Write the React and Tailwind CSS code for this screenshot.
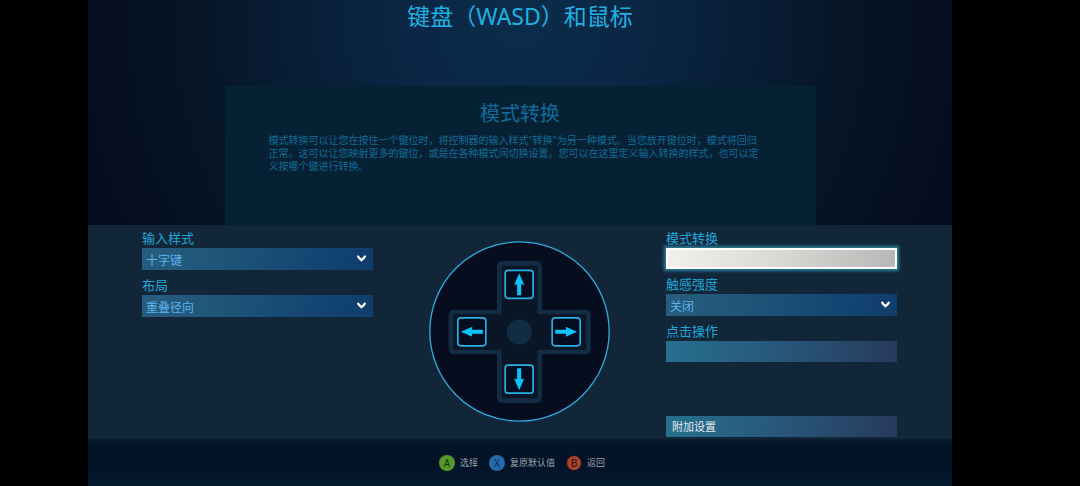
import React from "react";

const SELECT_FILL =
  "bg-[linear-gradient(100deg,#275d7c_0%,#1f5579_35%,#144572_75%,#0f3d6c_100%)]";
const BUTTON_FILL =
  "bg-[linear-gradient(100deg,#277090_0%,#28597b_45%,#273a5c_100%)]";

function SelectField({ id, label, value }) {
  return (
    <div className="flex flex-col">
      <label htmlFor={id} className="text-[13px] leading-5 text-[#20a6d8]">
        {label}
      </label>
      <div className="relative">
        <select
          id={id}
          defaultValue={value}
          className={`block h-[22px] w-full appearance-none pt-1 pr-8 pl-1 text-xs leading-[18px] text-[#5cb2ee] outline-none ${SELECT_FILL}`}
        >
          <option>{value}</option>
        </select>
        <svg
          viewBox="0 0 27 21"
          className="pointer-events-none absolute top-[7px] right-[7px] h-[7px] w-[9px]"
          fill="none"
          stroke="#ffffff"
          strokeWidth="7"
        >
          <path d="M2.5 2 C4 8 9 12 13.5 15.5 C18 12 23 8 24.5 2" />
        </svg>
      </div>
    </div>
  );
}

function ButtonField({ id, label, focused }) {
  return (
    <div className="flex flex-col">
      <label htmlFor={id} className="text-[13px] leading-5 text-[#20a6d8]">
        {label}
      </label>
      <button
        id={id}
        type="button"
        className={
          focused
            ? "h-[21px] border-2 border-white bg-[linear-gradient(100deg,#f2f1ed_0%,#d8d8d5_50%,#b6b6b4_100%)] bg-origin-border shadow-[0_0_3px_2px_#2b7f98]"
            : `h-[21px] ${BUTTON_FILL}`
        }
      />
    </div>
  );
}

const ARROW = "M0 -33 L15 2 Q10 0 6 0 L6 33 L-6 33 L-6 0 Q-10 0 -15 2 Z";

const KEYS = [
  { x: 298.5, y: 148, turn: 0 },
  { x: 439.5, y: 290.5, turn: 90 },
  { x: 298.5, y: 432.5, turn: 180 },
  { x: 156.5, y: 290.5, turn: 270 },
];

const CROSS =
  "M249 85 H350 Q360 85 360 95 V231 H496 Q506 231 506 241 V341 Q506 351 496 351 H360 V487 Q360 497 350 497 H249 Q239 497 239 487 V351 H104 Q94 351 94 341 V241 Q94 231 104 231 H239 V95 Q239 85 249 85 Z";

function DPad() {
  return (
    <svg viewBox="28 18 543 543" className="h-[181px] w-[181px]" role="img" aria-label="十字键">
      <circle cx="299.5" cy="289.5" r="269" fill="#050d1e" stroke="#2eaade" strokeWidth="4" />
      <path d={CROSS} fill="#0a1526" stroke="#112c43" strokeWidth="14" />
      <circle cx="299" cy="291" r="38" fill="#122c44" />
      {KEYS.map((key) => (
        <g key={key.turn} transform={`translate(${key.x} ${key.y})`}>
          <rect x="-42" y="-42" width="84" height="84" rx="9" fill="#050e20" stroke="#29b0e4" strokeWidth="5" />
          <path d={ARROW} transform={`rotate(${key.turn})`} fill="#0cc4fb" />
        </g>
      ))}
    </svg>
  );
}

function Hint({ letter, text, color }) {
  return (
    <button type="button" className="flex items-center gap-[5px] text-[9px] leading-4 text-[#98a3af]">
      <span
        className={`flex size-4 items-center justify-center rounded-full text-[10px] leading-none ${color}`}
      >
        {letter}
      </span>
      {text}
    </button>
  );
}

export default function App() {
  return (
    <div className="min-h-screen bg-black pr-32 pl-[88px] font-['Noto_Sans','Noto_Sans_CJK_SC',sans-serif]">
      <div className="flex min-h-screen flex-col bg-[#050d1e]">
        <header className="flex flex-1 flex-col items-center bg-[radial-gradient(ellipse_440px_480px_at_50%_8%,#0b2d49_0%,#0a2745_25%,#081e38_50%,#061526_75%,#050d1e_100%)]">
          <h1 className="text-[23px] leading-8 text-[#21b0e2]">键盘（WASD）和鼠标</h1>
          <section className="mt-[54px] flex w-[591px] max-w-full flex-1 flex-col items-center bg-[#072134] pb-12">
            <h2 className="pt-3 text-xl leading-8 text-[#0f6c9b]">模式转换</h2>
            <p className="mt-1 mr-2 w-[495px] text-[10px] leading-[13px] text-[#126b98]">
              模式转换可以让您在按住一个键位时，将控制器的输入样式"转换"为另一种模式。当您放开键位时，模式将回归正常。这可以让您映射更多的键位，或是在各种模式间切换设置。您可以在这里定义输入转换的样式，也可以定义按哪个键进行转换。
            </p>
          </section>
        </header>

        <main className="flex justify-between bg-[#12263a] pt-[3px] pr-[55px] pb-0.5 pl-[54px]">
          <div className="flex w-[231px] flex-col gap-[5px]">
            <SelectField id="style" label="输入样式" value="十字键" />
            <SelectField id="layout" label="布局" value="重叠径向" />
          </div>
          <div className="pt-[13px]">
            <DPad />
          </div>
          <div className="flex w-[231px] flex-col gap-[5px]">
            <ButtonField id="shift" label="模式转换" focused />
            <SelectField id="haptics" label="触感强度" value="关闭" />
            <ButtonField id="click" label="点击操作" />
            <button
              type="button"
              className={`mt-[49px] h-[21px] pl-1.5 text-left text-[11px] leading-5 text-[#e4edf2] ${BUTTON_FILL}`}
            >
              附加设置
            </button>
          </div>
        </main>

        <footer className="flex h-[47px] items-center justify-center gap-[11px] bg-[linear-gradient(180deg,#0b1d30_0%,#041629_10%,#021226_50%,#031a2f_100%)] pl-1">
          <Hint letter="A" text="选择" color="bg-[#55982a] text-[#12300a]" />
          <Hint letter="X" text="复原默认值" color="bg-[#256bab] text-[#0a2748]" />
          <Hint letter="B" text="返回" color="border border-[#1c1414] bg-[#a8432d] text-[#380c08]" />
        </footer>
      </div>
    </div>
  );
}
